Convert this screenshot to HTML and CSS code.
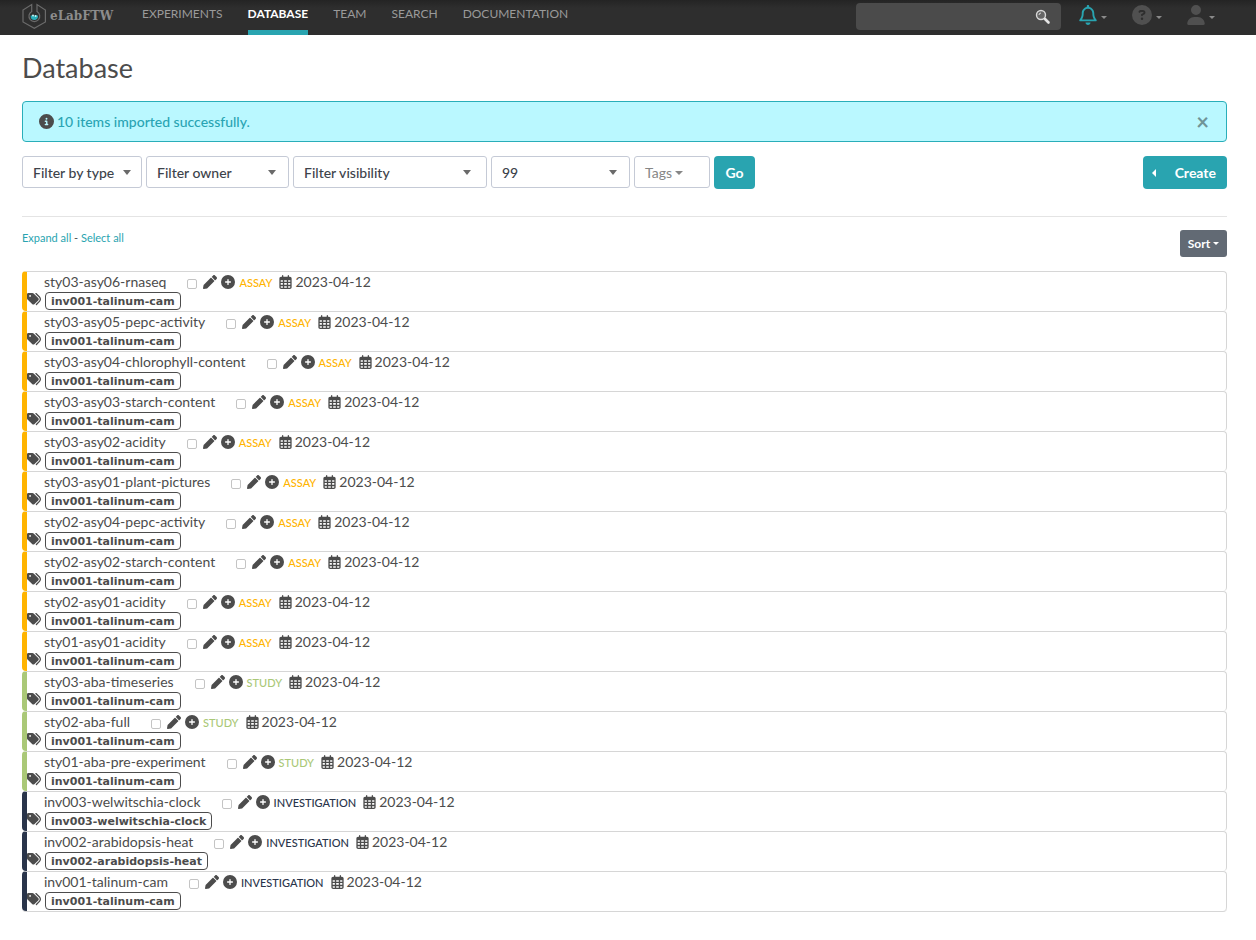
FILE: index.html
```html
<!DOCTYPE html>
<html lang="en">
<head>
<meta charset="utf-8">
<title>Database - eLabFTW</title>
<link rel="stylesheet" href="styles.css">
</head>
<body>
<svg class="sprite" aria-hidden="true">
  <symbol id="pencil" viewBox="0 0 512 512"><path d="M497.9 142.1l-46.1 46.1c-4.7 4.7-12.3 4.7-17 0l-111-111c-4.7-4.7-4.7-12.3 0-17l46.1-46.1c18.7-18.7 49.1-18.7 67.9 0l60.1 60.1c18.8 18.7 18.8 49.1 0 67.9zM284.2 99.8L21.6 362.4.4 483.9c-2.9 16.4 11.4 30.6 27.8 27.8l121.5-21.3 262.6-262.6c4.7-4.7 4.7-12.3 0-17l-111-111c-4.8-4.7-12.4-4.7-17.1 0z"/></symbol>
  <symbol id="plus" viewBox="0 0 512 512"><path d="M256 512A256 256 0 1 0 256 0a256 256 0 1 0 0 512zM232 344V280H168c-13.3 0-24-10.7-24-24s10.7-24 24-24h64V168c0-13.3 10.7-24 24-24s24 10.7 24 24v64h64c13.3 0 24 10.7 24 24s-10.7 24-24 24H280v64c0 13.3-10.7 24-24 24s-24-10.7-24-24z"/></symbol>
  <symbol id="calendar" viewBox="0 0 448 512"><path fill-rule="evenodd" d="M96 24c0-32 48-32 48 0V64H304V24c0-32 48-32 48 0V64h32c35 0 64 29 64 64V448c0 35-29 64-64 64H64c-35 0-64-29-64-64V128C0 93 29 64 64 64H96zM48 192v56h80v-56zm128 0v56h96v-56zm144 0v56h80v-56zM48 296v64h80v-64zm128 0v64h96v-64zm144 0v64h80v-64zM48 408v40c0 9 7 16 16 16h64v-56zm128 0v56h96v-56zm144 0v56h64c9 0 16-7 16-16v-40z"/></symbol>
  <symbol id="tags" viewBox="0 0 512 512"><path d="M345 39.1L472.8 168.4c52.4 53 52.4 138.2 0 191.2L360.8 472.9c-9.3 9.4-24.5 9.5-33.9 .2s-9.5-24.5-.2-33.9L438.6 325.9c33.9-34.3 33.9-89.4 0-123.7L310.9 72.9c-9.3-9.4-9.2-24.6 .2-33.9s24.6-9.2 33.9 .2zM0 229.5V80C0 53.5 21.5 32 48 32H197.5c17 0 33.3 6.7 45.3 18.7l168 168c25 25 25 65.5 0 90.5L277.3 442.7c-25 25-65.5 25-90.5 0l-168-168C6.7 262.7 0 246.5 0 229.5zM144 144a32 32 0 1 0 -64 0 32 32 0 1 0 64 0z"/></symbol>
</svg>

<header class="topbar">
  <a class="brand" href="#">
    <svg class="brand-mark" viewBox="0 0 24 26" aria-hidden="true">
      <path d="M9.7 9V1.6L1 7v12l11.300 6.200L23.400 19V7L15 1.600V9" fill="none" stroke="#6b6b6b" stroke-width="1.200"/>
      <path d="M9.700 8.500a5.400 5.400 0 1 0 5.300 0" fill="none" stroke="#6b6b6b" stroke-width="1.200"/>
      <path d="M8.700 12.500h7.200a3.700 3.700 0 1 1-7.200 0z" fill="#29aeb9"/>
      <circle cx="11" cy="12.500" r="1" fill="#c9f3f5"/><circle cx="13.600" cy="13" r="1" fill="#c9f3f5"/>
    </svg>
    <span>eLabFTW</span>
  </a>
  <nav class="nav">
    <a href="#">EXPERIMENTS</a>
    <a class="active" href="#">DATABASE</a>
    <a href="#">TEAM</a>
    <a href="#">SEARCH</a>
    <a href="#">DOCUMENTATION</a>
  </nav>
  <form class="search">
    <input type="text" aria-label="Search">
    <button type="button" aria-label="Search">
      <svg viewBox="0 0 16 16" aria-hidden="true"><circle cx="6" cy="6" r="4.500" fill="#666" stroke="#d8d8d8" stroke-width="1.400"/><path d="M4 6a2 2 0 0 1 2-2" fill="none" stroke="#ddd"/><path d="M10 10l3.500 3.500" stroke="#e4e4e4" stroke-width="2.600" stroke-linecap="round"/></svg>
    </button>
  </form>
  <div class="tools">
    <button class="tool bell" type="button" aria-label="Notifications"><svg viewBox="0 0 448 512" aria-hidden="true"><path d="M224 0c-17.7 0-32 14.3-32 32V51.2C119 66 64 130.6 64 208v25.4c0 45.4-15.5 89.5-43.8 124.9L5.3 377c-5.8 7.2-6.9 17.1-2.9 25.4S14.8 416 24 416H424c9.2 0 17.6-5.3 21.6-13.6s2.9-18.2-2.9-25.4l-14.9-18.6C399.5 322.9 384 278.8 384 233.4V208c0-77.4-55-142-128-156.8V32c0-17.7-14.3-32-32-32zm0 96c61.9 0 112 50.1 112 112v25.4c0 47.9 13.9 94.6 39.7 134.6H72.3C98.1 328 112 281.3 112 233.4V208c0-61.9 50.1-112 112-112zm64 352H224 160c0 17 6.7 33.3 18.7 45.3s28.3 18.7 45.3 18.7s33.3-6.7 45.3-18.7s18.7-28.3 18.7-45.3z"/></svg><i class="caret"></i></button>
    <button class="tool help" type="button" aria-label="Help"><svg viewBox="0 0 512 512" aria-hidden="true"><path d="M256 512A256 256 0 1 0 256 0a256 256 0 1 0 0 512zM169.8 165.3c7.9-22.3 29.1-37.3 52.8-37.3h58.3c34.9 0 63.1 28.3 63.1 63.1c0 22.6-12.1 43.5-31.7 54.8L280 264.4c-.2 13-10.9 23.6-24 23.6c-13.3 0-24-10.7-24-24V250.5c0-8.6 4.6-16.5 12.1-20.8l44.3-25.4c4.7-2.7 7.6-7.7 7.6-13.1c0-8.4-6.8-15.1-15.1-15.1H222.6c-3.4 0-6.4 2.1-7.5 5.3l-.4 1.2c-4.4 12.5-18.2 19-30.6 14.6s-19-18.2-14.6-30.6l.4-1.2zM224 352a32 32 0 1 1 64 0 32 32 0 1 1 -64 0z"/></svg><i class="caret"></i></button>
    <button class="tool" type="button" aria-label="Account"><svg viewBox="0 0 448 512" aria-hidden="true"><path d="M224 256A128 128 0 1 0 224 0a128 128 0 1 0 0 256zm-45.7 48C79.8 304 0 383.8 0 482.3C0 498.7 13.3 512 29.7 512H418.3c16.4 0 29.7-13.3 29.7-29.7C448 383.8 368.2 304 269.7 304H178.3z"/></svg><i class="caret"></i></button>
  </div>
</header>

<main class="page">
  <h1>Database</h1>
  <div class="alert" role="status">
    <svg viewBox="0 0 512 512" aria-hidden="true"><path d="M256 512A256 256 0 1 0 256 0a256 256 0 1 0 0 512zM216 336h24V272H216c-13.3 0-24-10.7-24-24s10.7-24 24-24h48c13.3 0 24 10.7 24 24v88h8c13.3 0 24 10.7 24 24s-10.7 24-24 24H216c-13.3 0-24-10.7-24-24s10.7-24 24-24zm40-208a32 32 0 1 1 0 64 32 32 0 1 1 0-64z"/></svg>
    <span>10 items imported successfully.</span>
    <button type="button" aria-label="Close">×</button>
  </div>

  <form class="filters">
    <span class="select type"><select aria-label="Filter by type"><option>Filter by type</option></select></span>
    <span class="select owner"><select aria-label="Filter owner"><option>Filter owner</option></select></span>
    <span class="select visibility"><select aria-label="Filter visibility"><option>Filter visibility</option></select></span>
    <span class="select limit"><select aria-label="Items per page"><option>99</option></select></span>
    <button class="tags-button" type="button">Tags<i class="caret"></i></button>
    <button class="primary go" type="button">Go</button>
    <button class="primary create" type="button"><i class="caret-left"></i>Create</button>
  </form>

  <div class="list-tools">
    <p><a href="#">Expand all</a> - <a href="#">Select all</a></p>
    <button class="sort" type="button">Sort<i class="caret"></i></button>
  </div>

  <section class="items">
    <article class="item assay"><div class="line"><a class="title" href="#">sty03-asy06-rnaseq</a><input type="checkbox" aria-label="Select sty03-asy06-rnaseq"><svg><use href="#pencil"/></svg><svg><use href="#plus"/></svg><span class="kind">ASSAY</span><svg class="cal"><use href="#calendar"/></svg><time>2023-04-12</time></div><div class="tagline"><svg><use href="#tags"/></svg><a class="tag" href="#">inv001-talinum-cam</a></div></article>
    <article class="item assay"><div class="line"><a class="title" href="#">sty03-asy05-pepc-activity</a><input type="checkbox" aria-label="Select sty03-asy05-pepc-activity"><svg><use href="#pencil"/></svg><svg><use href="#plus"/></svg><span class="kind">ASSAY</span><svg class="cal"><use href="#calendar"/></svg><time>2023-04-12</time></div><div class="tagline"><svg><use href="#tags"/></svg><a class="tag" href="#">inv001-talinum-cam</a></div></article>
    <article class="item assay"><div class="line"><a class="title" href="#">sty03-asy04-chlorophyll-content</a><input type="checkbox" aria-label="Select sty03-asy04-chlorophyll-content"><svg><use href="#pencil"/></svg><svg><use href="#plus"/></svg><span class="kind">ASSAY</span><svg class="cal"><use href="#calendar"/></svg><time>2023-04-12</time></div><div class="tagline"><svg><use href="#tags"/></svg><a class="tag" href="#">inv001-talinum-cam</a></div></article>
    <article class="item assay"><div class="line"><a class="title" href="#">sty03-asy03-starch-content</a><input type="checkbox" aria-label="Select sty03-asy03-starch-content"><svg><use href="#pencil"/></svg><svg><use href="#plus"/></svg><span class="kind">ASSAY</span><svg class="cal"><use href="#calendar"/></svg><time>2023-04-12</time></div><div class="tagline"><svg><use href="#tags"/></svg><a class="tag" href="#">inv001-talinum-cam</a></div></article>
    <article class="item assay"><div class="line"><a class="title" href="#">sty03-asy02-acidity</a><input type="checkbox" aria-label="Select sty03-asy02-acidity"><svg><use href="#pencil"/></svg><svg><use href="#plus"/></svg><span class="kind">ASSAY</span><svg class="cal"><use href="#calendar"/></svg><time>2023-04-12</time></div><div class="tagline"><svg><use href="#tags"/></svg><a class="tag" href="#">inv001-talinum-cam</a></div></article>
    <article class="item assay"><div class="line"><a class="title" href="#">sty03-asy01-plant-pictures</a><input type="checkbox" aria-label="Select sty03-asy01-plant-pictures"><svg><use href="#pencil"/></svg><svg><use href="#plus"/></svg><span class="kind">ASSAY</span><svg class="cal"><use href="#calendar"/></svg><time>2023-04-12</time></div><div class="tagline"><svg><use href="#tags"/></svg><a class="tag" href="#">inv001-talinum-cam</a></div></article>
    <article class="item assay"><div class="line"><a class="title" href="#">sty02-asy04-pepc-activity</a><input type="checkbox" aria-label="Select sty02-asy04-pepc-activity"><svg><use href="#pencil"/></svg><svg><use href="#plus"/></svg><span class="kind">ASSAY</span><svg class="cal"><use href="#calendar"/></svg><time>2023-04-12</time></div><div class="tagline"><svg><use href="#tags"/></svg><a class="tag" href="#">inv001-talinum-cam</a></div></article>
    <article class="item assay"><div class="line"><a class="title" href="#">sty02-asy02-starch-content</a><input type="checkbox" aria-label="Select sty02-asy02-starch-content"><svg><use href="#pencil"/></svg><svg><use href="#plus"/></svg><span class="kind">ASSAY</span><svg class="cal"><use href="#calendar"/></svg><time>2023-04-12</time></div><div class="tagline"><svg><use href="#tags"/></svg><a class="tag" href="#">inv001-talinum-cam</a></div></article>
    <article class="item assay"><div class="line"><a class="title" href="#">sty02-asy01-acidity</a><input type="checkbox" aria-label="Select sty02-asy01-acidity"><svg><use href="#pencil"/></svg><svg><use href="#plus"/></svg><span class="kind">ASSAY</span><svg class="cal"><use href="#calendar"/></svg><time>2023-04-12</time></div><div class="tagline"><svg><use href="#tags"/></svg><a class="tag" href="#">inv001-talinum-cam</a></div></article>
    <article class="item assay"><div class="line"><a class="title" href="#">sty01-asy01-acidity</a><input type="checkbox" aria-label="Select sty01-asy01-acidity"><svg><use href="#pencil"/></svg><svg><use href="#plus"/></svg><span class="kind">ASSAY</span><svg class="cal"><use href="#calendar"/></svg><time>2023-04-12</time></div><div class="tagline"><svg><use href="#tags"/></svg><a class="tag" href="#">inv001-talinum-cam</a></div></article>
    <article class="item study"><div class="line"><a class="title" href="#">sty03-aba-timeseries</a><input type="checkbox" aria-label="Select sty03-aba-timeseries"><svg><use href="#pencil"/></svg><svg><use href="#plus"/></svg><span class="kind">STUDY</span><svg class="cal"><use href="#calendar"/></svg><time>2023-04-12</time></div><div class="tagline"><svg><use href="#tags"/></svg><a class="tag" href="#">inv001-talinum-cam</a></div></article>
    <article class="item study"><div class="line"><a class="title" href="#">sty02-aba-full</a><input type="checkbox" aria-label="Select sty02-aba-full"><svg><use href="#pencil"/></svg><svg><use href="#plus"/></svg><span class="kind">STUDY</span><svg class="cal"><use href="#calendar"/></svg><time>2023-04-12</time></div><div class="tagline"><svg><use href="#tags"/></svg><a class="tag" href="#">inv001-talinum-cam</a></div></article>
    <article class="item study"><div class="line"><a class="title" href="#">sty01-aba-pre-experiment</a><input type="checkbox" aria-label="Select sty01-aba-pre-experiment"><svg><use href="#pencil"/></svg><svg><use href="#plus"/></svg><span class="kind">STUDY</span><svg class="cal"><use href="#calendar"/></svg><time>2023-04-12</time></div><div class="tagline"><svg><use href="#tags"/></svg><a class="tag" href="#">inv001-talinum-cam</a></div></article>
    <article class="item investigation"><div class="line"><a class="title" href="#">inv003-welwitschia-clock</a><input type="checkbox" aria-label="Select inv003-welwitschia-clock"><svg><use href="#pencil"/></svg><svg><use href="#plus"/></svg><span class="kind">INVESTIGATION</span><svg class="cal"><use href="#calendar"/></svg><time>2023-04-12</time></div><div class="tagline"><svg><use href="#tags"/></svg><a class="tag" href="#">inv003-welwitschia-clock</a></div></article>
    <article class="item investigation"><div class="line"><a class="title" href="#">inv002-arabidopsis-heat</a><input type="checkbox" aria-label="Select inv002-arabidopsis-heat"><svg><use href="#pencil"/></svg><svg><use href="#plus"/></svg><span class="kind">INVESTIGATION</span><svg class="cal"><use href="#calendar"/></svg><time>2023-04-12</time></div><div class="tagline"><svg><use href="#tags"/></svg><a class="tag" href="#">inv002-arabidopsis-heat</a></div></article>
    <article class="item investigation"><div class="line"><a class="title" href="#">inv001-talinum-cam</a><input type="checkbox" aria-label="Select inv001-talinum-cam"><svg><use href="#pencil"/></svg><svg><use href="#plus"/></svg><span class="kind">INVESTIGATION</span><svg class="cal"><use href="#calendar"/></svg><time>2023-04-12</time></div><div class="tagline"><svg><use href="#tags"/></svg><a class="tag" href="#">inv001-talinum-cam</a></div></article>
  </section>
</main>
</body>
</html>
```

FILE: styles.css
```css
* { box-sizing: border-box; }
body { margin: 0; background: #fff; color: #4c4c4c; font: 14px/20px Lato, "Liberation Sans", sans-serif; }
a { color: inherit; text-decoration: none; }
button, input, select { font: inherit; }
button { cursor: pointer; border: 0; padding: 0; }
svg { fill: currentColor; flex: none; }
.sprite { display: none; }
.caret { display: inline-block; border: 3px solid transparent; border-top-color: currentColor; border-bottom: 0; }

.topbar { display: flex; height: 35px; padding: 0 41px 0 22px; background: linear-gradient(#242424, #2e2e2e 8px); color: #9a9a9a; }
.brand { display: flex; align-items: center; gap: 4px; width: 120px; height: 32px; color: #8c8c8c; font: bold 12px/20px "DejaVu Serif", serif; }
.brand-mark { width: 24px; height: 26px; }
.nav { display: flex; gap: 25px; font-size: 12px; line-height: 28px; }
.nav .active { color: #fff; font-weight: bold; border-bottom: 5px solid #29a4b0; }
.search { display: flex; align-items: center; width: 205px; height: 27px; margin: 3px 18px 0 auto; padding-right: 10px; border-radius: 4px; background: #4b4b4b; }
.search input { flex: 1; min-width: 0; border: 0; background: none; color: #fff; outline: 0; }
.search button { display: flex; background: none; }
.search svg { width: 16px; height: 16px; }
.tools { display: flex; gap: 25px; height: 30px; align-items: center; }
.tool { display: flex; align-items: center; gap: 4px; background: none; color: #505050; }
.tool svg { height: 20px; width: 18px; }
.tool.help svg { width: 20px; }
.tool .caret { color: #8a8a8a; margin-top: 4px; }
.tool.bell { color: #29a4b0; }

.page { padding: 16px 29px 16px 22px; }
h1 { margin: 0 0 16px; font-size: 27px; line-height: 34px; font-weight: 400; }
.alert { display: flex; align-items: center; height: 41px; padding: 0 17px 0 16px; border: 1px solid #29aeb9; border-radius: 4px; background: #baf8ff; color: #29a4b3; font-weight: 500; }
.alert svg { width: 15px; height: 15px; margin-right: 3px; color: #4c4c4c; }
.alert button { margin-left: auto; background: none; color: #6f9497; font: bold 22px/20px Lato, sans-serif; }

.filters { display: flex; gap: 4px; margin-top: 14px; padding-bottom: 27px; border-bottom: 1px solid #e4e4e4; }
.select { display: flex; align-items: center; position: relative; height: 32px; }
.select::after { content: ""; position: absolute; right: 11px; border: 4px solid transparent; border-top: 5px solid #6a6a6a; border-bottom: 0; pointer-events: none; }
.select select { appearance: none; width: 100%; height: 32px; padding: 1px 10px 0; border: 1px solid #c5cad6; border-radius: 3px; background: #fff; color: #3d434b; font-weight: 500; }
.type { width: 120px; }
.owner { width: 143px; }
.visibility { width: 194px; }
.limit { width: 139px; }
.select.visibility::after { right: 16px; }
.select.limit::after, .select.owner::after { right: 13px; }
.tags-button { display: flex; align-items: center; width: 76px; height: 32px; padding: 1px 10px 0; gap: 3px; border: 1px solid #c5cad6; border-radius: 3px; background: #fff; color: #868686; }
.tags-button .caret { border-width: 4px 4px 0; }
.primary { height: 33px; border-radius: 4px; background: #29a4b0; color: #fff; font-weight: bold; }
.go { width: 41px; }
.create { display: flex; align-items: center; justify-content: space-between; width: 84px; margin-left: auto; padding: 0 11px 0 9px; }
.caret-left { border: 4px solid transparent; border-right-color: #fff; border-left: 0; }

.list-tools { display: flex; justify-content: space-between; margin-top: 13px; }
.list-tools p { margin: 0; font-size: 11px; line-height: 16px; }
.list-tools a { color: #29a4b0; }
.sort { display: flex; align-items: center; justify-content: center; gap: 3px; width: 47px; height: 27px; border-radius: 3px; background: #626a74; color: #fff; font-size: 12px; font-weight: bold; }

.items { margin-top: 14px; border-bottom: 1px solid #d6d6d6; border-radius: 4px; }
.item { height: 40px; border: 1px solid #d6d6d6; border-bottom: 0; border-left: 5px solid var(--kind); border-radius: 4px; }
.assay { --kind: #ffb400; }
.study { --kind: #aac877; }
.investigation { --kind: #29344a; }
.line { display: flex; align-items: center; height: 20px; padding-left: 17px; }
.line svg { width: 14px; height: 14px; margin-right: 4px; }
.line .cal { width: 13px; margin: 0 3px 0 7px; }
.line input { appearance: none; width: 10px; height: 10px; margin: 4px 6px 0 21px; border: 1px solid #c4c4c4; border-radius: 2px; background: #fff; }
.kind { color: var(--kind); font-size: 11px; line-height: 18px; font-weight: 500; padding-top: 2px; }
.tagline { display: flex; height: 18px; }
.tagline svg { width: 14px; height: 14px; margin-right: 4px; }
.tag { height: 18px; padding: 0 5px; border: 1px solid #4c4c4c; border-radius: 4px; font: bold 11px/18px "DejaVu Sans", sans-serif; }
```
